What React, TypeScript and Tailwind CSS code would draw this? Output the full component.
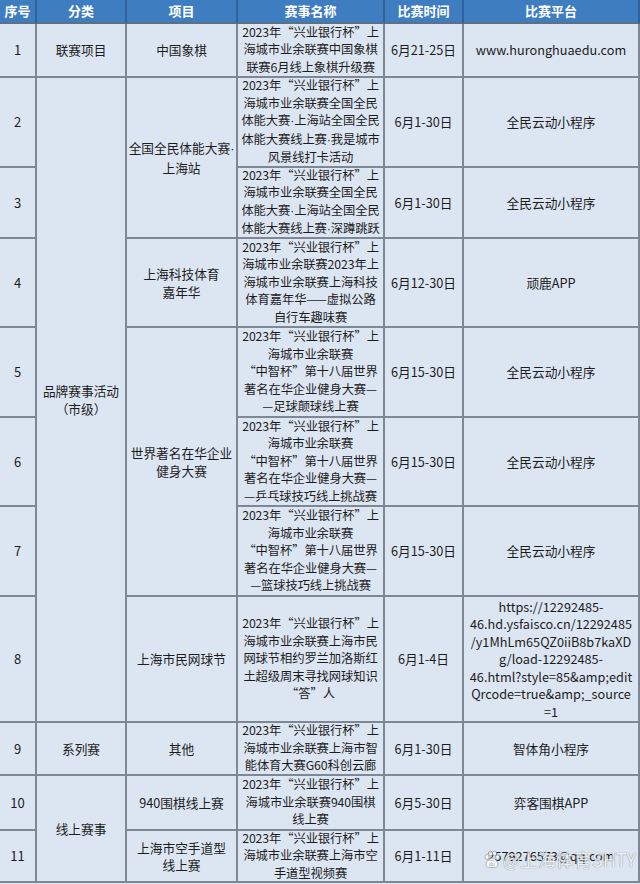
import React from 'react';

const FONT = { fontFamily: '"Noto Sans CJK SC", "Noto Sans", sans-serif' };
const NARROW = { fontFamily: '"Liberation Sans", sans-serif' };

const Q = '2023年“兴业银行杯”上';

interface Row {
  no: string;
  cat?: { text: string[]; span: string };
  item?: { text: string[]; span: string };
  event: string[];
  date: string;
  platform: string[];
}

const rows: Row[] = [
  {
    no: '1',
    cat: { text: ['联赛项目'], span: '' },
    item: { text: ['中国象棋'], span: '' },
    event: [Q, '海城市业余联赛中国象棋', '联赛6月线上象棋升级赛'],
    date: '6月21-25日',
    platform: ['www.huronghuaedu.com'],
  },
  {
    no: '2',
    cat: { text: ['品牌赛事活动', '（市级）'], span: 'row-span-7' },
    item: { text: ['全国全民体能大赛·', '上海站'], span: 'row-span-2' },
    event: [Q, '海城市业余联赛全国全民', '体能大赛·上海站全国全民', '体能大赛线上赛·我是城市', '风景线打卡活动'],
    date: '6月1-30日',
    platform: ['全民云动小程序'],
  },
  {
    no: '3',
    event: [Q, '海城市业余联赛全国全民', '体能大赛·上海站全国全民', '体能大赛线上赛·深蹲跳跃'],
    date: '6月1-30日',
    platform: ['全民云动小程序'],
  },
  {
    no: '4',
    item: { text: ['上海科技体育', '嘉年华'], span: '' },
    event: [Q, '海城市业余联赛2023年上', '海城市业余联赛上海科技', '体育嘉年华——虚拟公路', '自行车趣味赛'],
    date: '6月12-30日',
    platform: ['顽鹿APP'],
  },
  {
    no: '5',
    item: { text: ['世界著名在华企业', '健身大赛'], span: 'row-span-3' },
    event: [Q, '海城市业余联赛', '“中智杯”第十八届世界', '著名在华企业健身大赛—', '—足球颠球线上赛'],
    date: '6月15-30日',
    platform: ['全民云动小程序'],
  },
  {
    no: '6',
    event: [Q, '海城市业余联赛', '“中智杯”第十八届世界', '著名在华企业健身大赛—', '—乒乓球技巧线上挑战赛'],
    date: '6月15-30日',
    platform: ['全民云动小程序'],
  },
  {
    no: '7',
    event: [Q, '海城市业余联赛', '“中智杯”第十八届世界', '著名在华企业健身大赛—', '—篮球技巧线上挑战赛'],
    date: '6月15-30日',
    platform: ['全民云动小程序'],
  },
  {
    no: '8',
    item: { text: ['上海市民网球节'], span: '' },
    event: [Q, '海城市业余联赛上海市民', '网球节相约罗兰加洛斯红', '土超级周末寻找网球知识', '“答”人'],
    date: '6月1-4日',
    platform: [
      'https://12292485-',
      '46.hd.ysfaisco.cn/12292485',
      '/y1MhLm65QZ0iiB8b7kaXD',
      'g/load-12292485-',
      '46.html?style=85&amp;edit',
      'Qrcode=true&amp;_source',
      '=1',
    ],
  },
  {
    no: '9',
    cat: { text: ['系列赛'], span: '' },
    item: { text: ['其他'], span: '' },
    event: [Q, '海城市业余联赛上海市智', '能体育大赛G60科创云廊'],
    date: '6月1-30日',
    platform: ['智体角小程序'],
  },
  {
    no: '10',
    cat: { text: ['线上赛事'], span: 'row-span-2' },
    item: { text: ['940围棋线上赛'], span: '' },
    event: [Q, '海城市业余联赛940围棋', '线上赛'],
    date: '6月5-30日',
    platform: ['弈客围棋APP'],
  },
  {
    no: '11',
    item: { text: ['上海市空手道型', '线上赛'], span: '' },
    event: [Q, '海城市业余联赛上海市空', '手道型视频赛'],
    date: '6月1-11日',
    platform: ['2579276573@qq.com'],
  },
];

// the middle dot is drawn full width by the CJK font, so give it a latin one
function Line({ text }: { text: string }) {
  const parts = text.split('·');
  return (
    <span className="whitespace-nowrap">
      {parts.map((p, i) => (
        <React.Fragment key={i}>
          {i > 0 && <span style={NARROW}>·</span>}
          {p}
        </React.Fragment>
      ))}
    </span>
  );
}

function Cell({ lines, className = '' }: { lines: string[]; className?: string }) {
  return (
    <div
      className={`flex flex-col items-center justify-center text-center bg-[#dce6f2] border-r-2 border-b-2 border-[#7d8894] ${className}`}
    >
      {lines.map((l, i) => (
        <Line key={i} text={l} />
      ))}
    </div>
  );
}

export default function App() {
  const headers = ['序号', '分类', '项目', '赛事名称', '比赛时间', '比赛平台'];

  return (
    <div className="relative w-[640px] h-[884px] bg-[#dce6f2] overflow-hidden" style={FONT}>
      <div className="grid grid-cols-[37px_90px_111px_147px_79px_176px] grid-rows-[24px_54px_90px_71px_89px_90px_89px_90px_126px_53px_55px_52px] text-[12.7px] leading-[17.5px] text-[#1c1c1c]">
        {headers.map((h) => (
          <div
            key={h}
            className="flex items-center justify-center bg-[#3f7dc1] text-white font-bold text-[13px] border-r-2 border-b-2 border-r-[#2e639c] border-b-[#5d7183]"
          >
            {h}
          </div>
        ))}
        {rows.map((r) => (
          <React.Fragment key={r.no}>
            <Cell lines={[r.no]} className="text-[13px]" />
            {r.cat && <Cell lines={r.cat.text} className={r.cat.span} />}
            {r.item && <Cell lines={r.item.text} className={r.item.span} />}
            <Cell lines={r.event} className="text-[12.3px] tracking-[-0.1px]" />
            <Cell lines={[r.date]} />
            <Cell lines={r.platform} className="border-r-0" />
          </React.Fragment>
        ))}
      </div>

      {/* watermark */}
      <div className="absolute left-[483px] top-[848px] flex items-center gap-[2px] opacity-80 pointer-events-none">
        <svg width="18" height="18" viewBox="0 0 18 18">
          <g fill="#ffffff" stroke="#8a8f96" strokeWidth="0.8">
            <ellipse cx="4" cy="7" rx="2" ry="2.4" />
            <ellipse cx="7.5" cy="3.5" rx="2" ry="2.4" />
            <ellipse cx="11.5" cy="3.5" rx="2" ry="2.4" />
            <ellipse cx="14.5" cy="7" rx="2" ry="2.4" />
            <path d="M9 8c-3 0-6 4-6 7 0 2 2 2.5 6 2.5s6-.5 6-2.5c0-3-3-7-6-7z" />
          </g>
          <text x="6" y="15.5" fontSize="5" fill="#8a8f96" fontFamily="Liberation Sans, sans-serif">
            du
          </text>
        </svg>
        <span
          className="text-[18px] leading-[22px] text-white/90 whitespace-nowrap"
          style={{ textShadow: '0 0 1px #7a8088, 0 0 1px #7a8088' }}
        >
          @上海体育SHTY
        </span>
      </div>
    </div>
  );
}
